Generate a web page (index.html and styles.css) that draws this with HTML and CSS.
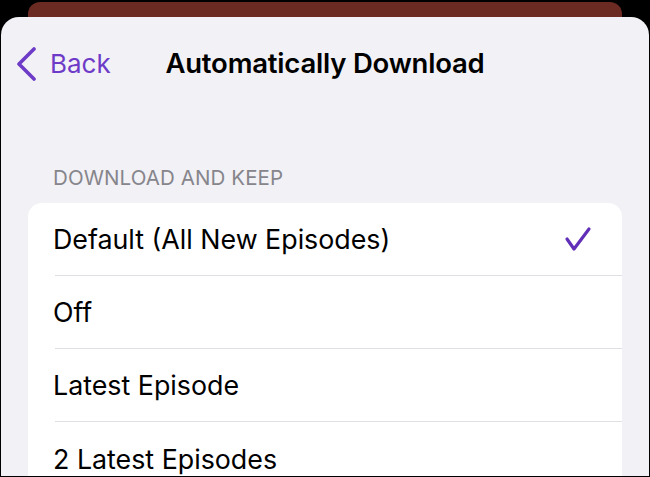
FILE: index.html
```html
<!DOCTYPE html>
<html lang="en">

<head>
    <meta charset="UTF-8">
    <meta name="viewport" content="width=device-width, initial-scale=1.0">
    <title>Automatically Download</title>
    <link rel="stylesheet" href="styles.css">
</head>

<body>

    <div class="behind-card"></div>

    <div class="sheet">
        <header class="nav-bar">
            <a class="back-btn" href="#">
                <svg width="22" height="34" viewBox="0 0 22 34">
                    <path d="M18 2 L3 17 L18 32" fill="none" stroke="currentColor" stroke-width="3.6"
                        stroke-linecap="round" stroke-linejoin="round" />
                </svg>
                <span>Back</span>
            </a>
            <h1>Automatically Download</h1>
            <div></div>
        </header>

        <main>
            <h2 class="section-title">DOWNLOAD AND KEEP</h2>

            <!-- Options list -->
            <ul class="option-list">
                <li class="option">
                    <span>Default (All New Episodes)</span>
                    <svg class="check" width="28" height="26" viewBox="0 0 28 26">
                        <path d="M3 13 L10 23 L25 3" fill="none" stroke="currentColor" stroke-width="3.2"
                            stroke-linecap="round" stroke-linejoin="round" />
                    </svg>
                </li>
                <li class="option"><span>Off</span></li>
                <li class="option"><span>Latest Episode</span></li>
                <li class="option"><span>2 Latest Episodes</span></li>
            </ul>
        </main>
    </div>

</body>

</html>
```

FILE: styles.css
```css
* {
    box-sizing: border-box;
    margin: 0;
    padding: 0;
    font-family: Inter, "Noto Sans", sans-serif;
}

html,
body {
    height: 100%;
    overflow: hidden;
}

body {
    background-color: #000000;
    padding: 2px 1px 1px 1px;
    display: flex;
    flex-direction: column;
}

/* Card peeking out behind the sheet */
.behind-card {
    height: 15px;
    margin: 0 27px;
    background-color: #6b2a22;
    border-radius: 12px 12px 0 0;
    flex-shrink: 0;
}

.sheet {
    flex: 1;
    background-color: #f2f1f6;
    border-radius: 18px 18px 0 0;
    overflow: hidden;
}

/* Navigation bar */
.nav-bar {
    display: grid;
    grid-template-columns: 1fr auto 1fr;
    align-items: center;
    height: 92px;
    padding: 0 15px;
}

.back-btn {
    display: flex;
    align-items: center;
    gap: 12px;
    color: #6e3bc8;
    text-decoration: none;
    font-size: 26px;
}

.back-btn svg {
    margin-top: 1px;
}

.nav-bar h1 {
    font-size: 27.5px;
    font-weight: 600;
    color: #000000;
    letter-spacing: -0.2px;
}

main {
    padding: 0 27px;
}

.section-title {
    font-size: 20.5px;
    font-weight: 400;
    color: #86858b;
    padding: 56px 0 0 25px;
    height: 94px;
    letter-spacing: 0.1px;
}

.option-list {
    list-style: none;
    background-color: #ffffff;
    border-radius: 14px;
}

.option {
    display: flex;
    align-items: center;
    justify-content: space-between;
    height: 73px;
    margin-left: 27px;
    padding-right: 30px;
    border-bottom: 1px solid #e0e0e4;
    font-size: 26.8px;
    color: #000000;
}

.option span {
    margin-left: -2px;
}

.option:last-child {
    border-bottom: none;
}

.check {
    color: #6230b8;
}
```
